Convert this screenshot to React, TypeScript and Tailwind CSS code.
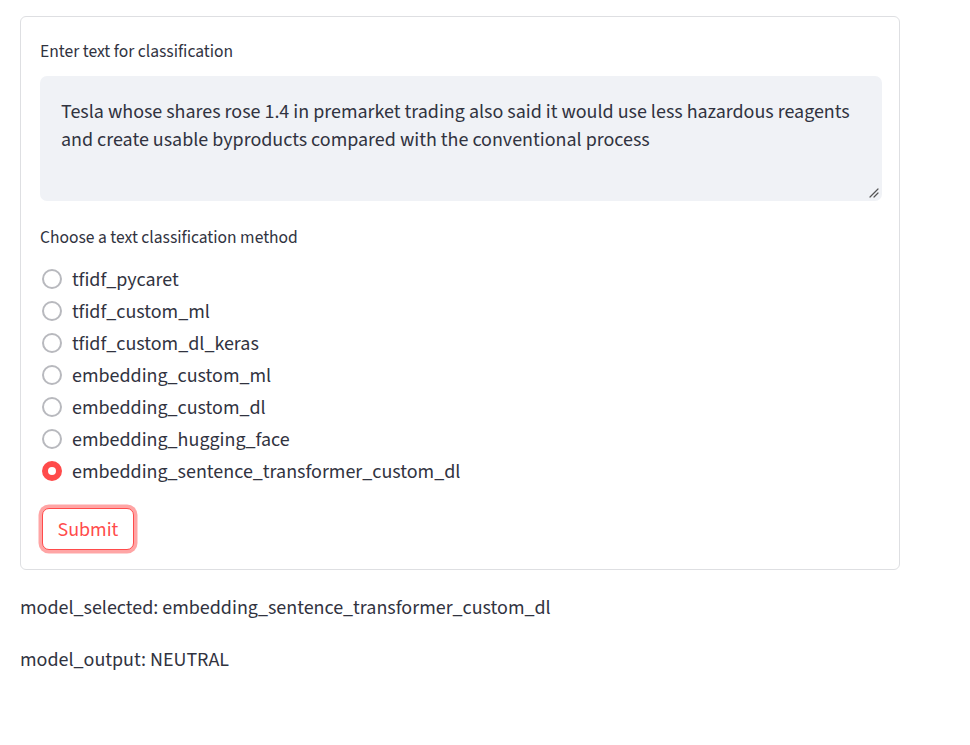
import React, { useState } from "react";

const options = [
  "tfidf_pycaret",
  "tfidf_custom_ml",
  "tfidf_custom_dl_keras",
  "embedding_custom_ml",
  "embedding_custom_dl",
  "embedding_hugging_face",
  "embedding_sentence_transformer_custom_dl",
];

const FONT = '"Source Sans Pro", "Source Sans 3", Lato, "Noto Sans", sans-serif';

export default function App() {
  const [selected, setSelected] = useState(options[6]);
  return (
    <div
      className="min-h-[745px] w-full bg-white text-[#31333f] pl-[20px] pt-[16px]"
      style={{ fontFamily: FONT }}
    >
      <div className="w-[880px]">
        <form
          className="rounded-[6px] border border-[#dedfe2] pl-[19px] pr-[17px] pt-[24px] pb-[19px] flex flex-col"
          onSubmit={(e) => e.preventDefault()}
        >
          <label className="text-[17.5px] leading-[20px] h-[20px] pt-[1px]">Enter text for classification</label>
          <div className="relative mt-[15px]">
            <textarea
              className="block w-full h-[125px] resize-none rounded-[7px] bg-[#f0f2f6] px-[21px] pt-[22px] text-[20px] leading-[28px] text-[#31333f] outline-none"
              style={{ fontFamily: FONT }}
              defaultValue="Tesla whose shares rose 1.4 in premarket trading also said it would use less hazardous reagents and create usable byproducts compared with the conventional process"
            />
            <svg
              className="absolute right-[3px] bottom-[3px] pointer-events-none"
              width="10"
              height="10"
              viewBox="0 0 10 10"
            >
              <path d="M9 1 L1 9 M9 5 L5 9" stroke="#555" strokeWidth="1.2" strokeLinecap="round" />
            </svg>
          </div>
          <div className="mt-[26px] text-[17.5px] leading-[20px] h-[20px] pt-[1px]">Choose a text classification method</div>
          <div className="mt-[16px] flex flex-col" role="radiogroup">
            {options.map((o) => {
              const on = o === selected;
              return (
                <label
                  key={o}
                  className="flex items-center h-[32px] cursor-pointer"
                  onClick={() => setSelected(o)}
                >
                  <span
                    className={
                      on
                        ? "ml-[2px] box-border w-[20px] h-[20px] rounded-full border-[6.5px] border-[#ff4b4b] bg-white"
                        : "ml-[2px] box-border w-[20px] h-[20px] rounded-full border-2 border-[#b8b9be] bg-white"
                    }
                  />
                  <span className="ml-[10px] pt-[2px] text-[20px] leading-[28px]">{o}</span>
                </label>
              );
            })}
          </div>
          <div className="mt-[21px]">
            <button
              type="submit"
              className="ml-[1.5px] h-[42px] px-[15px] pt-[2px] rounded-[7px] border border-[#ff4b4b] text-[#ff4b4b] text-[20px] leading-[28px] bg-white shadow-[0_0_0_3.5px_rgba(255,75,75,0.5)]"
              style={{ fontFamily: FONT }}
            >
              Submit
            </button>
          </div>
        </form>
        <div className="mt-[24px] text-[20px] leading-[28px]">model_selected: {selected}</div>
        <div className="mt-[24px] text-[20px] leading-[28px]">model_output: NEUTRAL</div>
      </div>
    </div>
  );
}
